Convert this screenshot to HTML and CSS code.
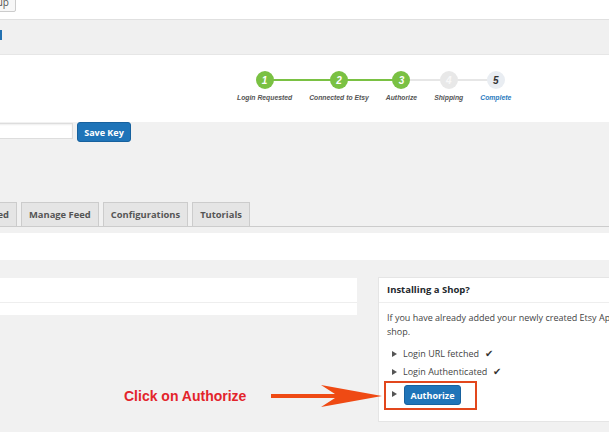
FILE: index.html
```html
<!DOCTYPE html>
<html lang="en">
<head>
<meta charset="utf-8">
<title>Etsy Integration</title>
<link rel="stylesheet" href="styles.css">
</head>
<body>
<div class="page">
  <header class="top-strip">
    <div class="clip-right"><button class="btn-secondary">Setup</button></div>
  </header>

  <div class="notice-band"><span class="blue-stub"></span></div>

  <section class="wizard">
    <ol class="steps">
      <li class="step g-right">
        <span class="dot">1</span><span class="label">Login Requested</span>
      </li>
      <li class="step g-left g-right">
        <span class="dot">2</span><span class="label">Connected to Etsy</span>
      </li>
      <li class="step g-left">
        <span class="dot">3</span><span class="label">Authorize</span>
      </li>
      <li class="step">
        <span class="dot dot-idle">4</span><span class="label">Shipping</span>
      </li>
      <li class="step">
        <span class="dot dot-next">5</span><span class="label label-link">Complete</span>
      </li>
    </ol>
  </section>

  <div class="key-row">
    <input class="key-input" type="text">
    <button class="btn-primary btn-save">Save Key</button>
  </div>

  <nav class="tabs">
    <div class="clip-tab"><a class="tab">Upload Feed</a></div>
    <a class="tab">Manage Feed</a>
    <a class="tab">Configurations</a>
    <a class="tab">Tutorials</a>
  </nav>

  <div class="white-band"></div>

  <main class="content">
    <section class="left-panel">
      <div class="panel-head"></div>
      <div class="panel-body"></div>
    </section>

    <aside class="shop-box">
      <h3 class="box-title">Installing a Shop?</h3>
      <div class="box-body">
        <p class="intro">If you have already added your newly created Etsy App credentials, follow the steps below to install the<br>shop.</p>
        <ul class="checklist">
          <li class="check-item"><span class="tri"></span><span>Login URL fetched</span><span class="tick">✔</span></li>
          <li class="check-item"><span class="tri"></span><span>Login Authenticated</span><span class="tick">✔</span></li>
          <li class="callout"><span class="tri tri-top"></span><button class="btn-primary btn-auth">Authorize</button></li>
        </ul>
      </div>
    </aside>

    <div class="annotation">
      <span class="annotation-text">Click on Authorize</span>
      <svg class="arrow" width="111" height="22" viewBox="0 0 111 22" aria-hidden="true">
        <polygon points="0,9 64,9 50,0 111,11 50,22 64,13 0,13" fill="#ef4a14"/>
      </svg>
    </div>
  </main>
</div>
</body>
</html>
```

FILE: styles.css
```css
* { box-sizing: border-box; margin: 0; padding: 0; }

html, body {
  width: 609px;
  height: 432px;
  overflow: hidden;
}

body {
  background: #f1f1f1;
  font-family: "Open Sans", "Noto Sans", sans-serif;
  font-size: 9px;
  color: #444;
}

/* top white strip with a cut-off button */
.top-strip {
  height: 19px;
  background: #fff;
  display: flex;
}

.clip-right {
  width: 16px;
  flex: none;
  display: flex;
  justify-content: flex-end;
}

.btn-secondary {
  flex: none;
  height: 20px;
  margin-top: -8px;
  padding: 0 6px;
  border: 1px solid #ccc;
  border-radius: 2px;
  background: #f7f7f7;
  color: #555;
  font: 10px "Open Sans", sans-serif;
  white-space: nowrap;
}

/* grey notice band */
.notice-band {
  height: 36px;
  border-top: 1px solid #e0e0e0;
  border-bottom: 1px solid #e6e6e6;
  background: #f0f0f0;
  padding-top: 10px;
}

.blue-stub {
  display: block;
  width: 2px;
  height: 10px;
  background: #2271b1;
}

/* progress wizard */
.wizard {
  height: 67px;
  background: #fff;
  padding: 16px 0 0 237px;
}

.steps {
  list-style: none;
  display: flex;
  gap: 17px;
}

.step {
  position: relative;
  display: flex;
  flex-direction: column;
  align-items: center;
}

.step::before,
.step::after {
  content: "";
  position: absolute;
  top: 8px;
  height: 2px;
  background: #e6e6e6;
}

.step::before { left: -17px; right: 50%; }
.step::after { left: 50%; right: 0; }
.step:first-child::before,
.step:last-child::after { display: none; }

.step.g-left::before,
.step.g-right::after { background: #7ac143; }

.dot {
  position: relative;
  z-index: 1;
  width: 18px;
  height: 18px;
  border-radius: 50%;
  display: flex;
  align-items: center;
  justify-content: center;
  background: #7ac143;
  color: #fff;
  font: italic bold 10px "Liberation Sans", Arial, sans-serif;
}

.dot-idle { background: #e8e8e8; color: #f8f8f8; }
.dot-next { background: #e9edf2; color: #333; }

.label {
  margin-top: 4px;
  white-space: nowrap;
  font: italic bold 6.8px/9px "Liberation Sans", Arial, sans-serif;
  color: #555;
}

.label-link { color: #2b7bc0; }

/* key row */
.key-row {
  height: 20px;
  display: flex;
  align-items: flex-start;
  gap: 4px;
}

.key-input {
  width: 90px;
  height: 16px;
  margin-left: -17px;
  margin-top: 1px;
  border: 1px solid #ddd;
  background: #fff;
  box-shadow: inset 0 1px 2px rgba(0, 0, 0, 0.07);
}

.btn-primary {
  height: 20px;
  padding: 0 6px;
  border: 1px solid #17619e;
  border-radius: 3px;
  background: #1f74b8;
  color: #fff;
  font: bold 9px "Open Sans", sans-serif;
  white-space: nowrap;
}

.btn-save { width: 54px; padding: 0; }

/* tabs */
.tabs {
  margin-top: 60px;
  height: 25px;
  display: flex;
  align-items: flex-end;
  gap: 4px;
  border-bottom: 1px solid #ccc;
}

.clip-tab {
  width: 17px;
  flex: none;
  display: flex;
  justify-content: flex-end;
}

.tab {
  flex: none;
  height: 24px;
  padding: 0 7px;
  display: flex;
  align-items: center;
  border: 1px solid #ccc;
  border-bottom: none;
  background: #e5e5e5;
  color: #555;
  font-weight: bold;
  font-size: 9.4px;
  white-space: nowrap;
}

.white-band {
  margin-top: 6px;
  height: 27px;
  background: #fff;
}

/* content */
.content {
  position: relative;
  margin-top: 17px;
  display: flex;
  align-items: flex-start;
  gap: 21px;
}

.left-panel {
  width: 357px;
  flex: none;
  margin-top: 1px;
  background: #fff;
}

.panel-head {
  height: 25px;
  border-bottom: 1px solid #eee;
}

.panel-body { height: 12px; }

.shop-box {
  width: 300px;
  flex: none;
  background: #fff;
  border: 1px solid #e5e5e5;
}

.box-title {
  height: 25px;
  padding-left: 8px;
  border-bottom: 1px solid #eee;
  line-height: 24px;
  font-size: 9.5px;
  font-weight: bold;
  color: #23282d;
}

.box-body {
  padding: 8px 8px 11px 8px;
}

.intro {
  line-height: 14px;
  white-space: nowrap;
  margin-bottom: 8px;
}

.checklist { list-style: none; }

.check-item {
  display: flex;
  align-items: center;
  gap: 6px;
  padding-left: 5px;
  line-height: 14px;
}

.check-item + .check-item { margin-top: 4px; }

.tri {
  flex: none;
  width: 0;
  height: 0;
  border-left: 5px solid #555;
  border-top: 3px solid transparent;
  border-bottom: 3px solid transparent;
}

.tick {
  margin-left: 0;
  font-size: 9.5px;
  color: #333;
}

.callout {
  width: 93px;
  margin: 2px 0 0 -3px;
  padding: 2px 14px 3px 6px;
  display: flex;
  align-items: flex-start;
  gap: 7px;
  border: 2px solid #e2471d;
}

.tri-top { margin-top: 6px; }

.btn-auth {
  width: 57px;
  padding: 0;
}

/* annotation overlay */
.annotation {
  position: absolute;
  left: 124px;
  top: 108px;
  height: 22px;
  display: flex;
  align-items: center;
  gap: 25px;
  z-index: 2;
}

.annotation-text {
  font: bold 14px "Liberation Sans", Arial, sans-serif;
  color: #e3242b;
  white-space: nowrap;
}

.arrow { display: block; flex: none; }
```
